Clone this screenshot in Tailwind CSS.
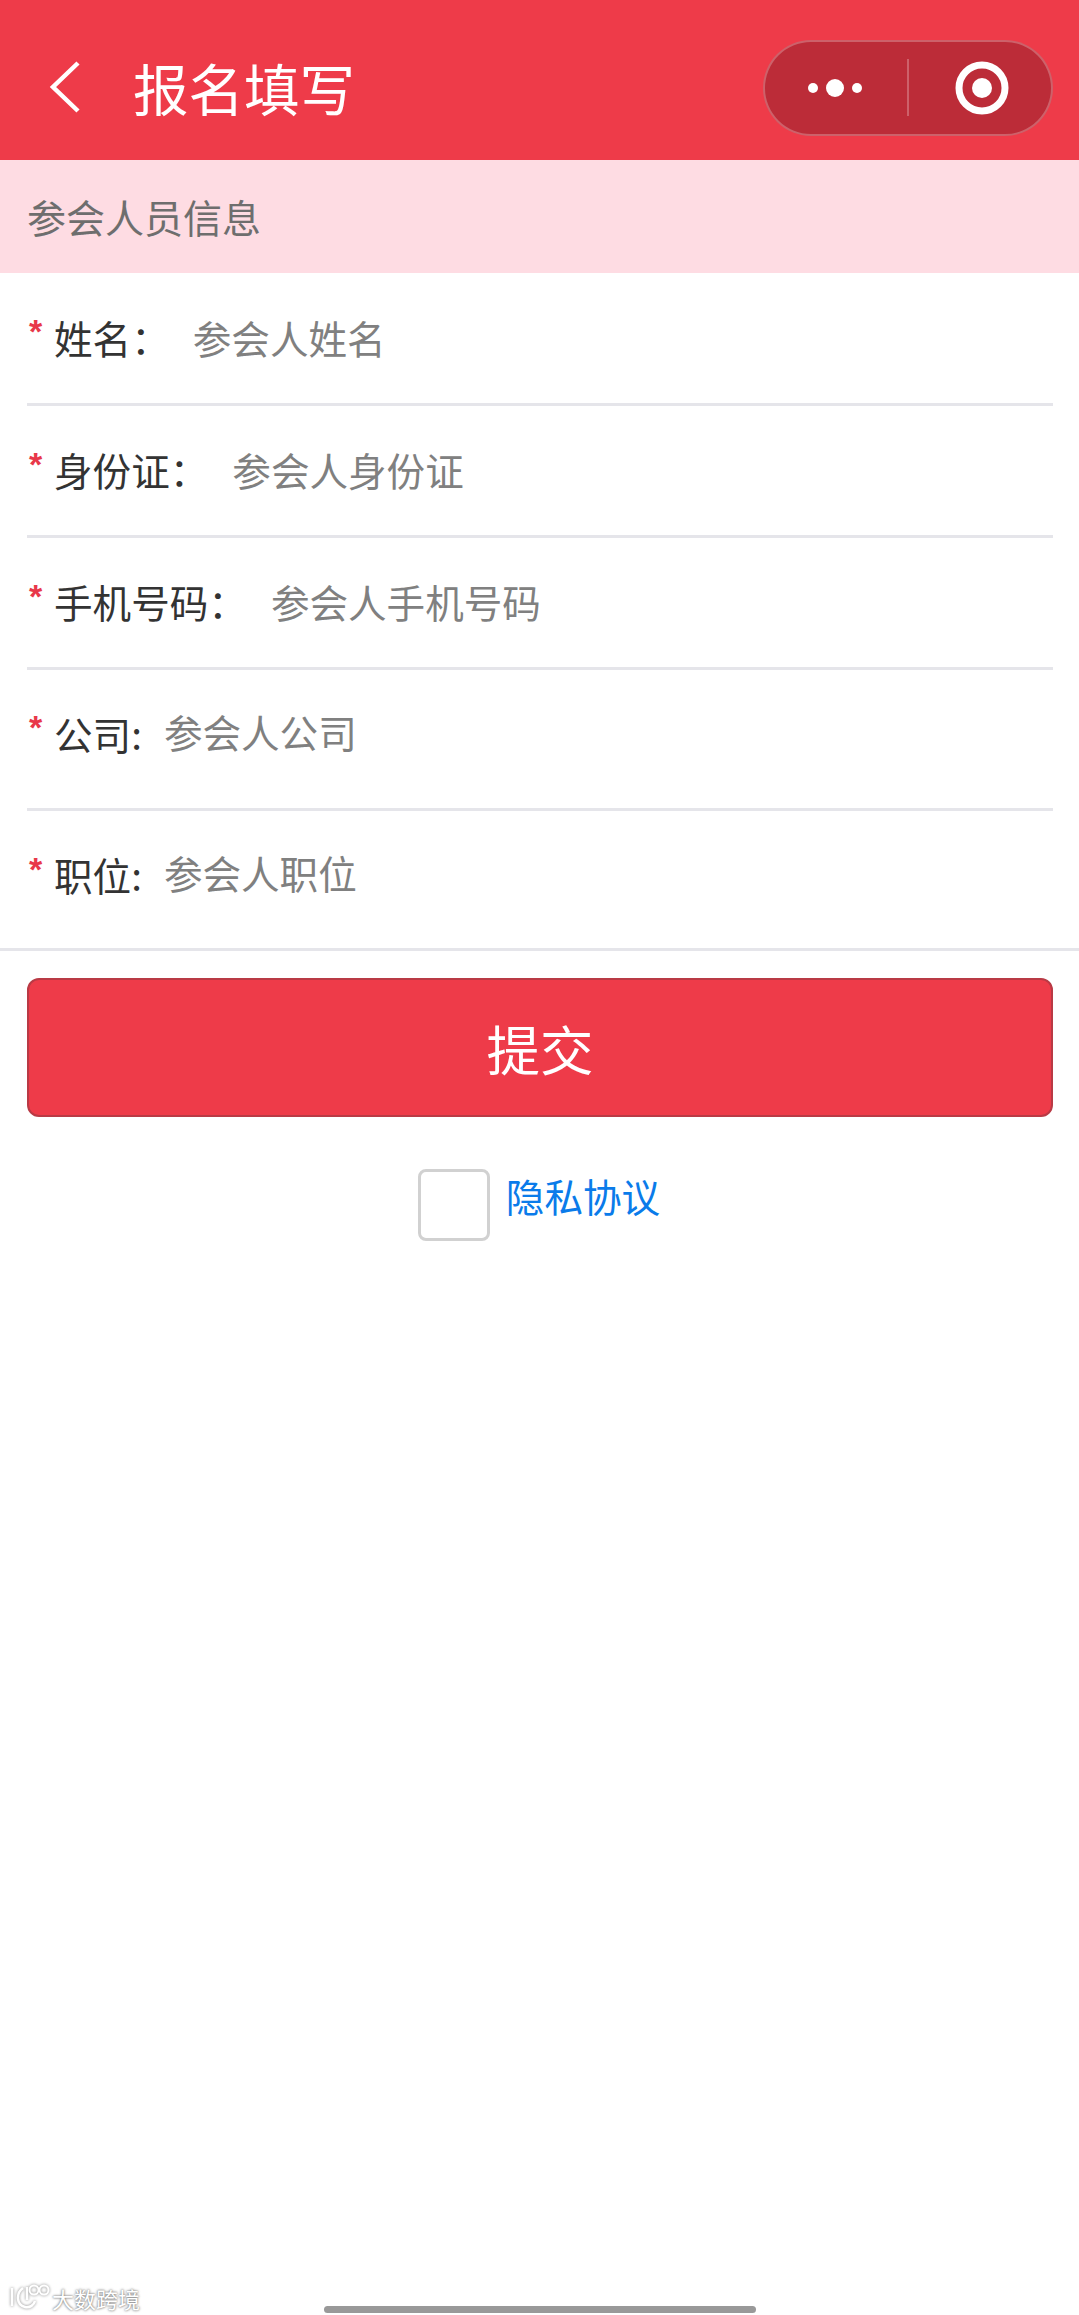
<!DOCTYPE html>
<html lang="zh-CN">
<head>
<meta charset="utf-8">
<script src="https://cdn.jsdelivr.net/npm/@tailwindcss/browser@4"></script>
</head>
<body class="bg-white font-['Noto_Sans_CJK_SC','Liberation_Sans',sans-serif]">
<div class="relative w-[1079px] h-[2315px] overflow-hidden bg-white">

  <header class="flex h-[160px] items-center bg-[#ee3b49] pl-[48px] pr-[26px] pt-[15px]">
    <svg class="w-[32px] h-[54px] shrink-0 -translate-y-[1px]" viewBox="0 0 32 54" fill="none">
      <path d="M30 3 L5 27 L30 51" stroke="#fff" stroke-width="4.5" fill="none"/>
    </svg>
    <h1 class="ml-[53px] text-[55.5px] leading-none font-normal text-white">报名填写</h1>
    <div class="ml-auto flex h-[96px] w-[290px] items-center rounded-full border-2 border-white/25 bg-[#bc2c38]">
      <div class="flex w-[142px] items-center justify-center gap-[8px] pr-[2px]">
        <span class="size-[10px] rounded-full bg-white"></span>
        <span class="size-[18px] rounded-full bg-white"></span>
        <span class="size-[10px] rounded-full bg-white"></span>
      </div>
      <div class="h-[57px] w-[2px] bg-white/25"></div>
      <div class="flex flex-1 items-center justify-center pl-[3px]">
        <svg class="size-[54px]" viewBox="0 0 54 54">
          <circle cx="27" cy="27" r="23" fill="none" stroke="#fff" stroke-width="7"/>
          <circle cx="27" cy="27" r="10" fill="#fff"/>
        </svg>
      </div>
    </div>
  </header>

  <div class="flex h-[113px] items-center bg-[#fedce3] pl-[27px] text-[39px] leading-none text-[#6e6e6e]">参会人员信息</div>

  <form>
    <div class="ml-[27px] mr-[26px] flex h-[133px] items-center border-b-[3px] border-[#e5e5ea] pb-[2px] text-[38.6px] leading-none">
      <span class="w-[27px] pl-[2px] font-['Liberation_Sans'] font-bold text-[34px] text-[#e8384a] -translate-y-[6px]">*</span>
      <span class="text-[#333333]">姓名：</span>
      <span class="ml-[23px] text-[#808080]">参会人姓名</span>
    </div>
    <div class="ml-[27px] mr-[26px] flex h-[132px] items-center border-b-[3px] border-[#e5e5ea] pb-[2px] text-[38.6px] leading-none">
      <span class="w-[27px] pl-[2px] font-['Liberation_Sans'] font-bold text-[34px] text-[#e8384a] -translate-y-[6px]">*</span>
      <span class="text-[#333333]">身份证：</span>
      <span class="ml-[24px] text-[#808080]">参会人身份证</span>
    </div>
    <div class="ml-[27px] mr-[26px] flex h-[132px] items-center border-b-[3px] border-[#e5e5ea] pb-[2px] text-[38.6px] leading-none">
      <span class="w-[27px] pl-[2px] font-['Liberation_Sans'] font-bold text-[34px] text-[#e8384a] -translate-y-[6px]">*</span>
      <span class="text-[#333333]">手机号码：</span>
      <span class="ml-[24px] text-[#808080]">参会人手机号码</span>
    </div>
    <div class="ml-[27px] mr-[26px] flex h-[141px] items-center border-b-[3px] border-[#e5e5ea] pb-[12px] text-[38.6px] leading-none">
      <span class="w-[27px] pl-[2px] font-['Liberation_Sans'] font-bold text-[34px] text-[#e8384a] -translate-y-[6px]">*</span>
      <span class="text-[#333333]">公司:</span>
      <span class="ml-[22px] -translate-y-[2px] text-[#808080]">参会人公司</span>
    </div>
    <div class="pl-[27px] flex h-[140px] items-center border-b-[3px] border-[#e5e5ea] pb-[10px] text-[38.6px] leading-none">
      <span class="w-[27px] pl-[2px] font-['Liberation_Sans'] font-bold text-[34px] text-[#e8384a] -translate-y-[6px]">*</span>
      <span class="text-[#333333]">职位:</span>
      <span class="ml-[22px] -translate-y-[2px] text-[#808080]">参会人职位</span>
    </div>

    <div class="ml-[27px] mr-[26px] mt-[27px] flex h-[139px] items-center justify-center rounded-[12px] border-2 border-[#b93a45] bg-[#ee3b49] text-[53.5px] leading-none text-white">提交</div>

    <div class="mt-[52px] flex justify-center">
      <div class="ml-[-1px] flex gap-[16px]">
        <span class="block h-[72px] w-[72px] rounded-[8px] border-[3px] border-[#d1d1d1] bg-white"></span>
        <span class="mt-[7px] text-[38.6px] leading-none text-[#0a7bea]">隐私协议</span>
      </div>
    </div>
  </form>

  <div class="absolute left-[10px] top-[2283px] flex items-end">
    <svg class="h-[26px] w-[40px]" viewBox="0 0 40 26" fill="none" stroke="#fff" stroke-width="2.5" style="filter:drop-shadow(0 0 1.5px #888)">
      <path d="M2 5 V23 M13 5 C6 10 6 22 15 24 C20 25 24 22 25 18"/>
      <path d="M17 4 V17"/>
      <circle cx="24" cy="7" r="4.5" stroke-width="2"/>
      <circle cx="34" cy="7" r="4.5" stroke-width="2"/>
    </svg>
    <span class="ml-[2px] text-[22px] leading-none text-white [text-shadow:0_0_2px_#777,0_0_3px_#999]">大数跨境</span>
  </div>

  <div class="absolute left-[324px] top-[2306px] h-[7px] w-[432px] rounded-full bg-[#999999]"></div>
</div>
</body>
</html>
